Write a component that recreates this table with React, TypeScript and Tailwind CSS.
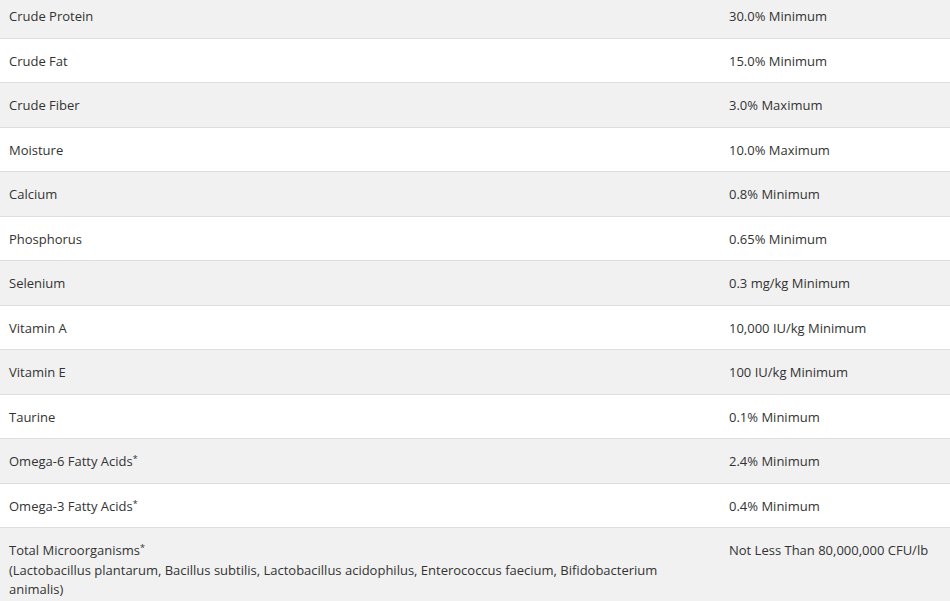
const star = <span className="relative -top-[4px] text-[9px] leading-none">*</span>;

const rows: { name: React.ReactNode; value: string }[] = [
  { name: 'Crude Protein', value: '30.0% Minimum' },
  { name: 'Crude Fat', value: '15.0% Minimum' },
  { name: 'Crude Fiber', value: '3.0% Maximum' },
  { name: 'Moisture', value: '10.0% Maximum' },
  { name: 'Calcium', value: '0.8% Minimum' },
  { name: 'Phosphorus', value: '0.65% Minimum' },
  { name: 'Selenium', value: '0.3 mg/kg Minimum' },
  { name: 'Vitamin A', value: '10,000 IU/kg Minimum' },
  { name: 'Vitamin E', value: '100 IU/kg Minimum' },
  { name: 'Taurine', value: '0.1% Minimum' },
  { name: <>Omega-6 Fatty Acids{star}</>, value: '2.4% Minimum' },
  { name: <>Omega-3 Fatty Acids{star}</>, value: '0.4% Minimum' },
  {
    name: (
      <>
        Total Microorganisms{star}
        <br />
        (Lactobacillus plantarum, Bacillus subtilis, Lactobacillus acidophilus, Enterococcus faecium, Bifidobacterium
        animalis)
      </>
    ),
    value: 'Not Less Than 80,000,000 CFU/lb',
  },
];

export default function App() {
  return (
    <div className="w-[950px] h-[601px] overflow-hidden bg-white font-['Open_Sans','Liberation_Sans',sans-serif] text-[13px] leading-[19.5px] text-[#333]">
      <table className="w-full border-collapse -mt-[6px]">
        <tbody>
          {rows.map((row, i) => (
            <tr key={i} className={`border-b border-[#dedede] ${i % 2 === 0 ? 'bg-[#f1f1f1]' : 'bg-white'}`}>
              <td className="w-[721px] pl-[9px] pr-2 pt-[13px] pb-[11px] align-top">{row.name}</td>
              <td className="px-2 pt-[13px] pb-[11px] align-top">{row.value}</td>
            </tr>
          ))}
        </tbody>
      </table>
    </div>
  );
}
